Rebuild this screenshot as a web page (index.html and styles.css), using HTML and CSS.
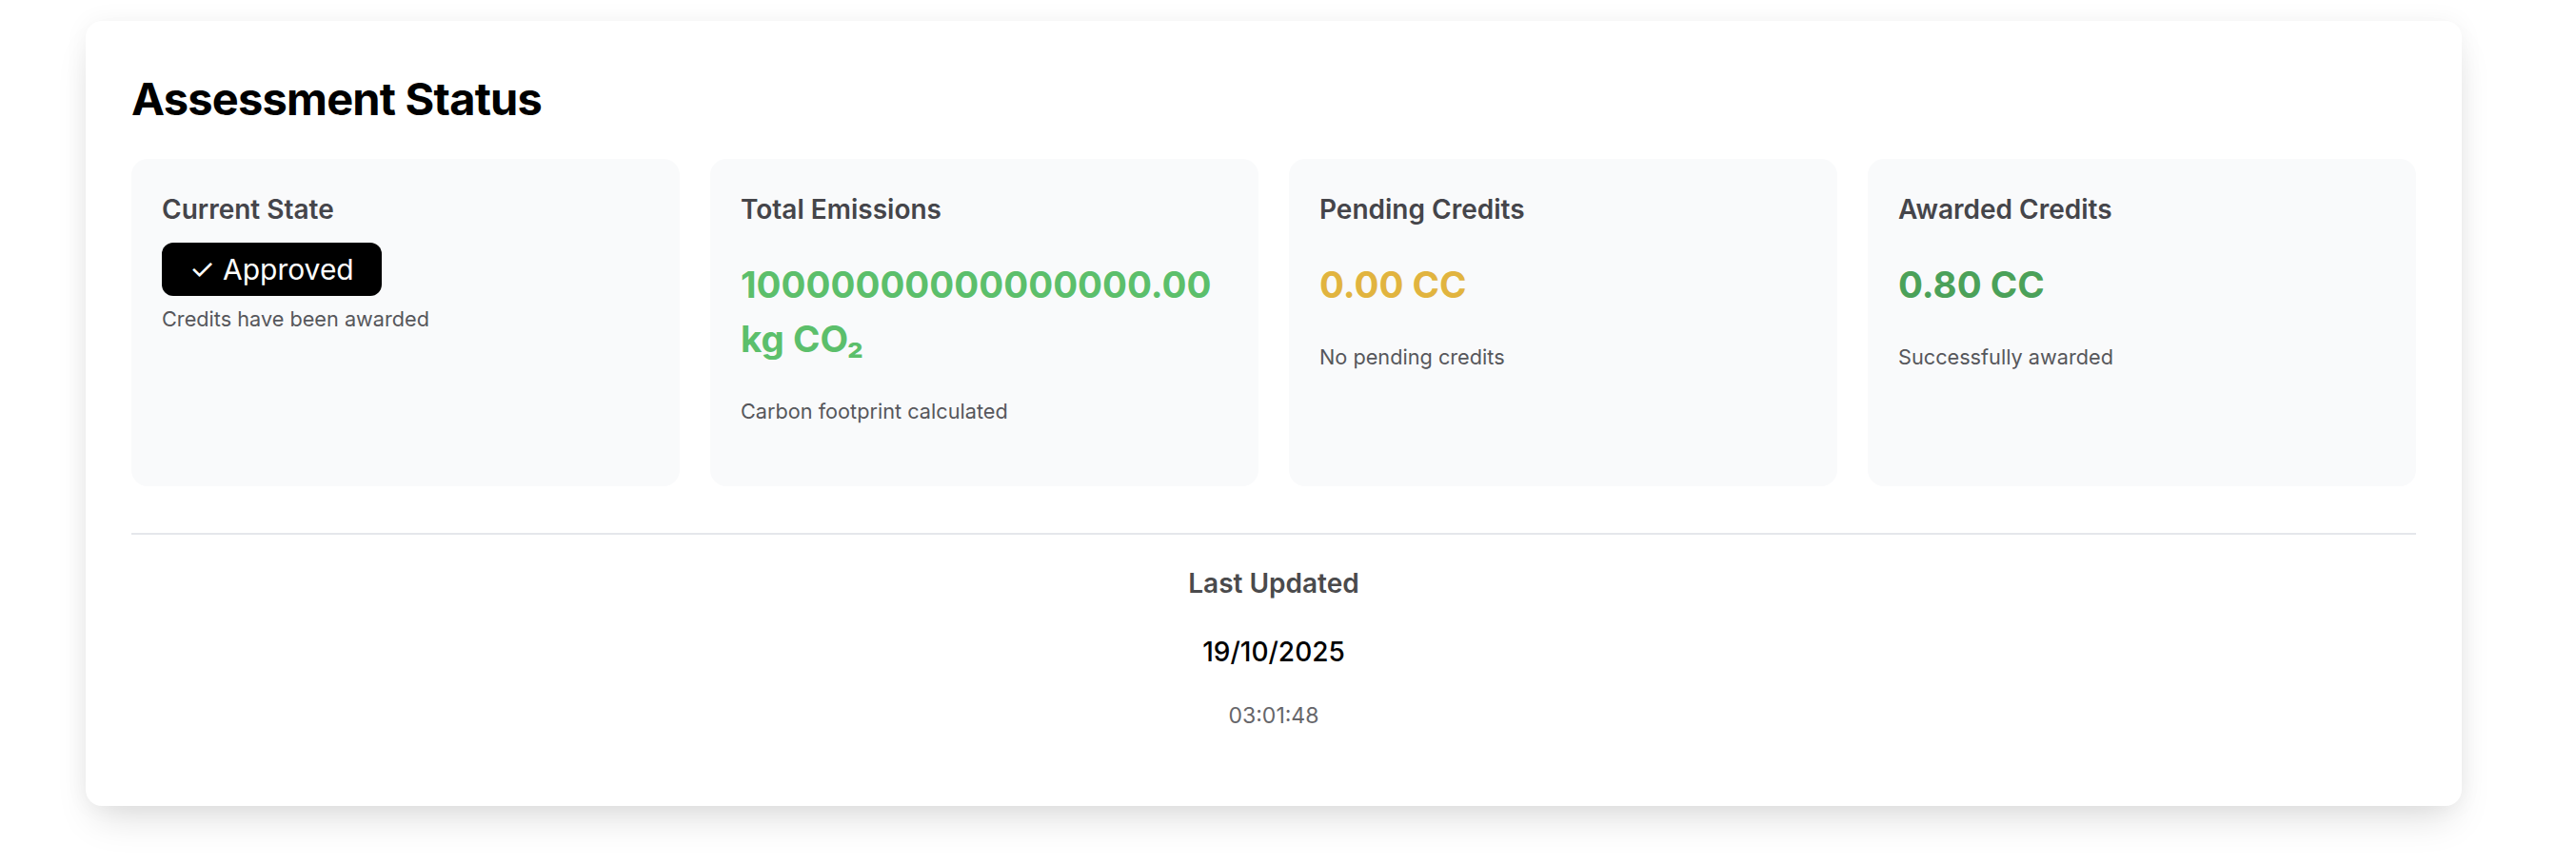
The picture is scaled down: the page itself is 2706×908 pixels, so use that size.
FILE: index.html
```html
<!DOCTYPE html>
<html lang="en">
<head>
    <meta charset="UTF-8">
    <meta name="viewport" content="width=device-width, initial-scale=1.0">
    <title>Assessment Status</title>
    <link rel="stylesheet" href="styles.css">
</head>
<body>

<div class="page">
    <section class="panel">
        <h2 class="panel-title">Assessment Status</h2>

        <div class="stats">
            <div class="stat-card">
                <h3 class="stat-label">Current State</h3>
                <span class="badge">✓ Approved</span>
                <p class="stat-note stat-note-tight">Credits have been awarded</p>
            </div>

            <div class="stat-card">
                <h3 class="stat-label">Total Emissions</h3>
                <p class="stat-value value-emissions">10000000000000000.00 kg CO₂</p>
                <p class="stat-note">Carbon footprint calculated</p>
            </div>

            <div class="stat-card">
                <h3 class="stat-label">Pending Credits</h3>
                <p class="stat-value value-pending">0.00 CC</p>
                <p class="stat-note">No pending credits</p>
            </div>

            <div class="stat-card">
                <h3 class="stat-label">Awarded Credits</h3>
                <p class="stat-value value-awarded">0.80 CC</p>
                <p class="stat-note">Successfully awarded</p>
            </div>
        </div>

        <div class="updated">
            <h4 class="updated-label">Last Updated</h4>
            <p class="updated-date">19/10/2025</p>
            <p class="updated-time">03:01:48</p>
        </div>
    </section>
</div>

</body>
</html>
```

FILE: styles.css
```css
* {
    margin: 0;
    padding: 0;
    box-sizing: border-box;
}

body {
    font-family: Inter, 'Noto Sans', 'DejaVu Sans', sans-serif;
    background-color: #fff;
    color: #000;
}

.page {
    padding: 22px 120px 60px 90px;
}

.panel {
    background-color: #fff;
    border-radius: 17px;
    padding: 48px;
    box-shadow: 0 22px 40px -10px rgba(0, 0, 0, 0.13), 0 0 26px rgba(0, 0, 0, 0.05);
}

.panel-title {
    font-size: 47px;
    font-weight: 700;
    line-height: 68px;
    margin-bottom: 29px;
    letter-spacing: -0.8px;
}

.stats {
    display: grid;
    grid-template-columns: repeat(4, 1fr);
    gap: 32px;
}

.stat-card {
    background-color: #f9fafb;
    border-radius: 17px;
    padding: 32px;
    min-height: 344px;
}

.stat-label {
    font-size: 28px;
    font-weight: 600;
    line-height: 42px;
    color: #45454a;
    margin-bottom: 14px;
}

.badge {
    display: inline-block;
    background-color: #000;
    color: #fff;
    font-size: 30px;
    line-height: 40px;
    padding: 8px 29px;
    border-radius: 12px;
}

/* margin-top collapses with the label's margin-bottom */
.stat-value {
    font-size: 38.5px;
    font-weight: 700;
    line-height: 56.8px;
    margin: 30px 0 31px;
}

.value-emissions {
    color: #5cbf6b;
}

.value-pending {
    color: #e1b43f;
}

.value-awarded {
    color: #4ba159;
}

.stat-note {
    font-size: 21.7px;
    line-height: 33px;
    color: #56575b;
}

.stat-note-tight {
    margin-top: 8px;
}

.updated {
    margin-top: 49px;
    border-top: 2px solid #e5e7eb;
    padding: 30px 0;
    display: flex;
    flex-direction: column;
    align-items: center;
    gap: 30px;
    text-align: center;
}

.updated-label {
    font-size: 28px;
    font-weight: 600;
    line-height: 42px;
    color: #4a4a4c;
}

.updated-date {
    font-size: 28px;
    font-weight: 500;
    line-height: 42px;
}

.updated-time {
    font-size: 23px;
    line-height: 33px;
    color: #66666a;
}
```
